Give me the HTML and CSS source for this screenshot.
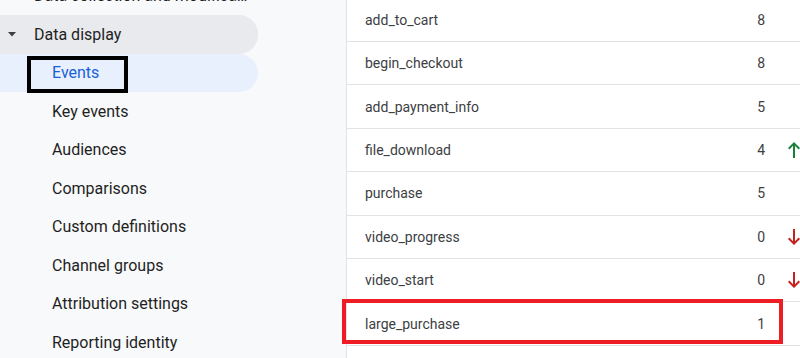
FILE: index.html
```html
<html>
<head>
    <link rel="stylesheet" href="styles.css">
</head>

<body>
    <div class="page">
        <!-- Admin navigation -->
        <div class="sidebar">
            <div class="nav-item group cut">Data collection and modification</div>
            <div class="nav-item group open">
                <svg class="caret" width="8" height="5" viewBox="0 0 8 5"><polygon points="0,0 8,0 4,4.5" fill="#3c4043"/></svg>
                Data display
            </div>
            <div class="nav-item sub active">Events</div>
            <div class="nav-item sub">Key events</div>
            <div class="nav-item sub">Audiences</div>
            <div class="nav-item sub">Comparisons</div>
            <div class="nav-item sub">Custom definitions</div>
            <div class="nav-item sub">Channel groups</div>
            <div class="nav-item sub">Attribution settings</div>
            <div class="nav-item sub">Reporting identity</div>
        </div>

        <!-- Events table -->
        <div class="events">
            <div class="row">
                <span class="name">add_to_cart</span>
                <span class="num">8</span>
                <span class="trend"></span>
            </div>
            <div class="row">
                <span class="name">begin_checkout</span>
                <span class="num">8</span>
                <span class="trend"></span>
            </div>
            <div class="row">
                <span class="name">add_payment_info</span>
                <span class="num">5</span>
                <span class="trend"></span>
            </div>
            <div class="row">
                <span class="name">file_download</span>
                <span class="num">4</span>
                <span class="trend">
                    <svg width="12" height="16" viewBox="0 0 12 16"><path d="M6 0L12 6L10.6 7.4L7 3.8V16H5V3.8L1.4 7.4L0 6Z" fill="#188038"/></svg>
                </span>
            </div>
            <div class="row">
                <span class="name">purchase</span>
                <span class="num">5</span>
                <span class="trend"></span>
            </div>
            <div class="row">
                <span class="name">video_progress</span>
                <span class="num">0</span>
                <span class="trend">
                    <svg width="12" height="16" viewBox="0 0 12 16"><path d="M6 16L12 10L10.6 8.6L7 12.2V0H5V12.2L1.4 8.6L0 10Z" fill="#c5221f"/></svg>
                </span>
            </div>
            <div class="row">
                <span class="name">video_start</span>
                <span class="num">0</span>
                <span class="trend">
                    <svg width="12" height="16" viewBox="0 0 12 16"><path d="M6 16L12 10L10.6 8.6L7 12.2V0H5V12.2L1.4 8.6L0 10Z" fill="#c5221f"/></svg>
                </span>
            </div>
            <div class="row marked">
                <span class="name">large_purchase</span>
                <span class="num">1</span>
                <span class="trend"></span>
            </div>
            <div class="row">
                <span class="name"></span>
                <span class="num"></span>
                <span class="trend"></span>
            </div>
        </div>
    </div>
</body>
</html>
```

FILE: styles.css
```css
body {
    margin: 0;
    overflow: hidden;
    background-color: #ffffff;
}

.page {
    display: grid;
    grid-template-columns: 347px 480px;
    height: 358px;
    overflow: hidden;
}

.sidebar {
    background-color: #f8f9fa;
    border-right: 1px solid #e3e3e3;
    font-family: Roboto, "Liberation Sans", sans-serif;
    font-size: 16px;
    color: #1f1f1f;
}

.nav-item {
    position: relative;
    display: flex;
    align-items: center;
    height: 38.5px;
    width: 258px;
    box-sizing: border-box;
    border-radius: 0 19px 19px 0;
    white-space: nowrap;
}

.group {
    padding-left: 34px;
}

.cut {
    margin-top: -23.5px;
    overflow: hidden;
    text-overflow: ellipsis;
    display: block;
    line-height: 38.5px;
    padding-right: 10px;
}

.open {
    background-color: #e9eaed;
}

.caret {
    position: absolute;
    left: 8px;
    top: 17px;
}

.sub {
    padding-left: 52px;
}

.active {
    background-color: #e8f0fe;
    color: #1a5fd6;
}

/* black annotation frame round the selected item */
.active::after {
    content: "";
    position: absolute;
    left: 27px;
    top: 2px;
    width: 101px;
    height: 37px;
    box-sizing: border-box;
    border: 4px solid #000000;
}

.events {
    font-family: Roboto, "Liberation Sans", sans-serif;
    font-size: 14px;
    color: #3c4043;
    padding-top: 0;
    margin-top: -1.4px;
}

.row {
    position: relative;
    display: flex;
    align-items: center;
    height: 42.4px;
    border-bottom: 1px solid #e3e3e3;
}

.name {
    flex: 1;
    padding-left: 18px;
}

.num {
    width: 60px;
    text-align: right;
}

.trend {
    width: 62px;
    padding-left: 23px;
    box-sizing: border-box;
    display: flex;
    align-items: center;
}

/* red annotation frame round the new event */
.marked::after {
    content: "";
    position: absolute;
    left: -5px;
    top: -3px;
    width: 441px;
    height: 45px;
    box-sizing: border-box;
    border: 4px solid #ee1c25;
}
```
